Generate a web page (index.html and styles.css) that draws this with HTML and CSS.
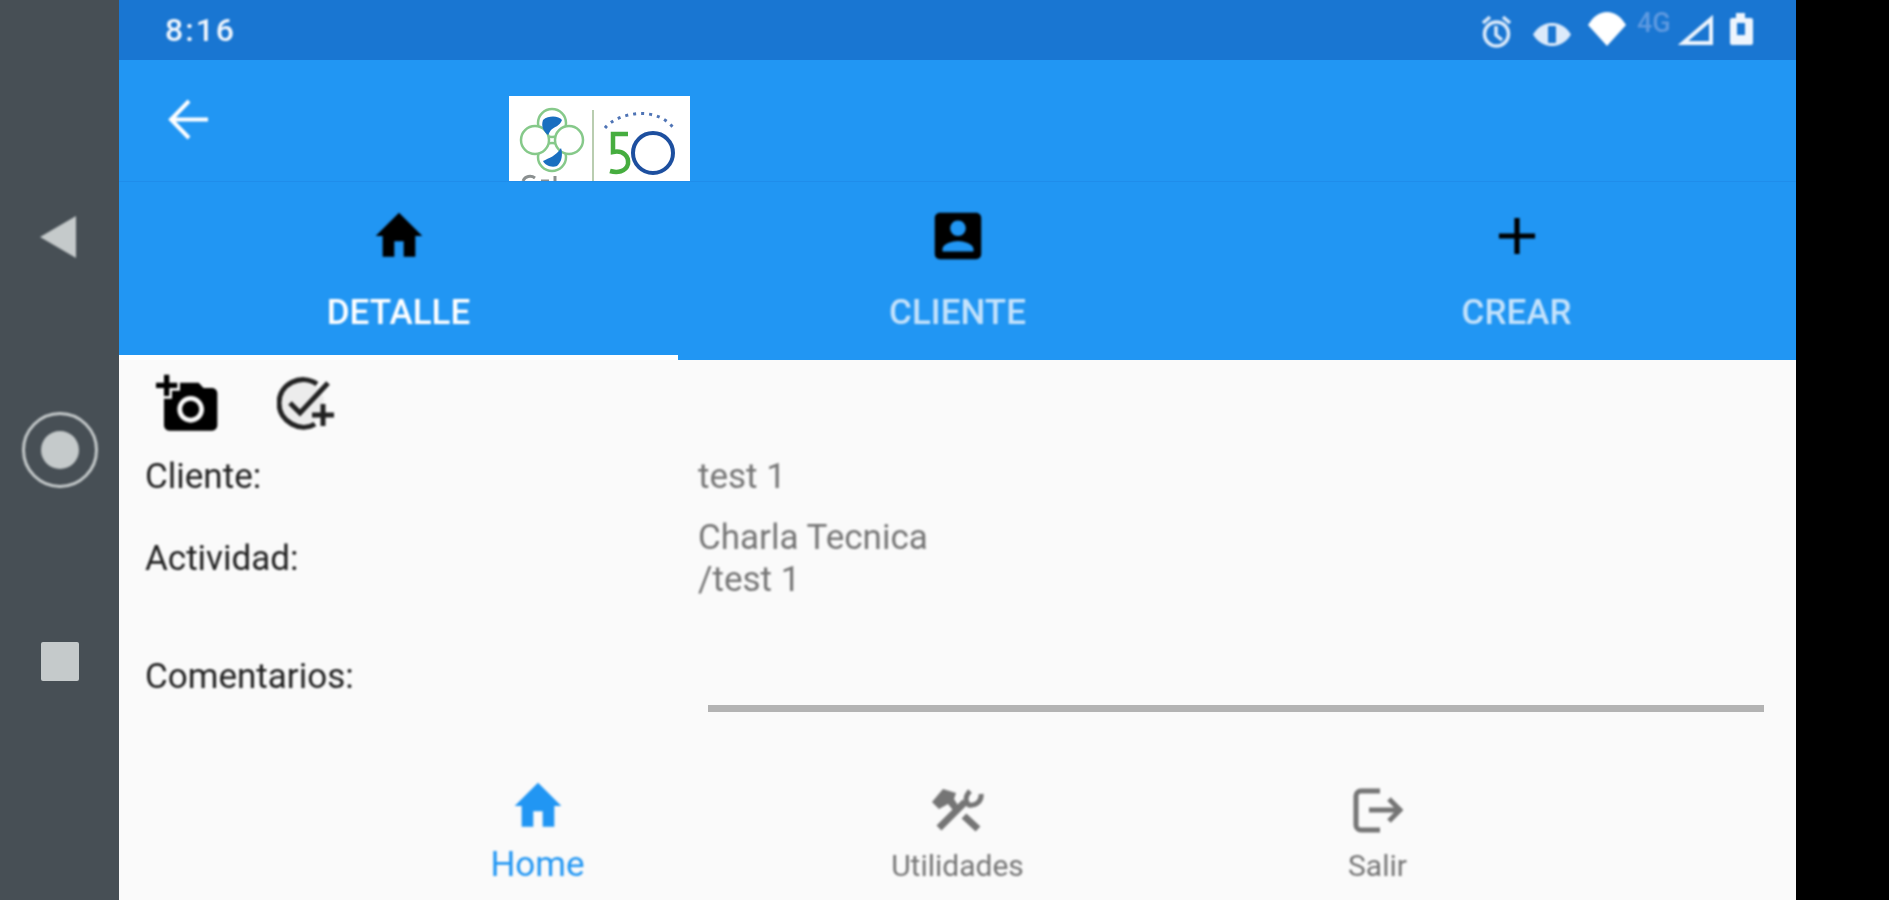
FILE: index.html
```html
<!DOCTYPE html>
<html>
<head>
    <title>Detalle</title>
    <link rel="stylesheet" href="styles.css">
</head>
<body>
    <div class="device">
        <div class="nav-keys">
            <svg class="key-back" viewBox="0 0 38 42"><path d="M37 0V42L1 21z"/></svg>
            <svg class="key-home" viewBox="0 0 76 76"><circle class="ring" cx="38" cy="38" r="36.5"/><circle cx="38" cy="38" r="19"/></svg>
            <div class="key-recent"></div>
        </div>

        <div class="screen">
            <div class="status-bar">
                <span class="clock">8:16</span>
                <div class="status-icons">
                    <svg class="status-left" viewBox="0 0 145 37">
                        <g fill="none" stroke="#dceafa" stroke-width="3.5">
                            <circle cx="15.5" cy="22" r="12"/>
                            <path d="M15 14v9l6 5M2 11l7-6M29 11l-7-6"/>
                        </g>
                        <path fill="#dceafa" d="M52 22.500C58 12 68 11 71 11S84 12 90 22.500C84 33 74 34 71 34S58 33 52 22.500z"/>
                        <rect x="67" y="14" width="8" height="17" rx="1" fill="#1976d2"/>
                        <path fill="#fff" d="M107 13C112 5 118 0 126 0 134 0 140 5 145 13L126 34z"/>
                    </svg>
                    <span class="net-type">4G</span>
                    <svg class="status-right" viewBox="0 0 75 34">
                        <path fill="none" stroke="#eef5fd" stroke-width="4" d="M5 30H33V6z"/>
                        <path fill="#eef5fd" d="M52 7a2 2 0 0 1 2-2h4V0h9v5h6a2 2 0 0 1 2 2v23a2 2 0 0 1-2 2H54a2 2 0 0 1-2-2z"/>
                        <rect x="59" y="10" width="8" height="12" fill="#1976d2"/>
                    </svg>
                </div>
            </div>

            <div class="app-bar">
                <svg class="back-arrow" viewBox="0 0 41 41"><path d="M40 20.500H3M21 2 3 20.500 21 39"/></svg>
                <div class="logo">
                    <svg viewBox="0 0 181 85">
                        <g fill="#fff" stroke="#86c98a" stroke-width="2.500">
                            <circle cx="43" cy="27" r="14"/>
                            <circle cx="43" cy="61" r="14"/>
                            <circle cx="26" cy="44" r="14"/>
                            <circle cx="60" cy="44" r="14"/>
                        </g>
                        <path fill="#1a6fc0" d="M34 24C40 19 50 20 53 24 51 30 45 31 42 34 40 37 39 39 39 39 34 35 32 30 34 24z"/>
                        <path fill="#1a6fc0" d="M52 52C54 58 53 66 48 70 42 72 36 69 34 65 40 62 47 60 52 52z"/>
                        <rect x="83" y="14" width="2" height="71" fill="#b9cdb0"/>
                        <path fill="none" stroke="#46ad3f" stroke-width="4.500" d="M119 38H104V56C114 54 120 60 119 68 117 76 108 77 101 75"/>
                        <circle cx="144" cy="57" r="20" fill="none" stroke="#1d4f9f" stroke-width="4"/>
                        <path fill="none" stroke="#4f74b5" stroke-width="3" stroke-dasharray="3 5" d="M96 32C108 17 148 8 166 34"/>
                        <path fill="none" stroke="#8a8f8f" stroke-width="3" d="M14 85c2-5 8-6 12-3M32 85h8M46 85v-5"/>
                    </svg>
                </div>
            </div>

            <div class="tabs">
                <div class="tab active">
                    <svg class="tab-icon" viewBox="0 0 24 24" preserveAspectRatio="none"><path d="M10 20v-6h4v6h5v-8h3L12 3 2 12h3v8z"/></svg>
                    <span>DETALLE</span>
                </div>
                <div class="tab">
                    <svg class="tab-icon" viewBox="0 0 24 24" preserveAspectRatio="none"><path d="M3 5v14c0 1.100.89 2 2 2h14c1.100 0 2-.9 2-2V5c0-1.100-.9-2-2-2H5c-1.110 0-2 .9-2 2zm12 4c0 1.660-1.340 3-3 3s-3-1.340-3-3 1.340-3 3-3 3 1.340 3 3zm-9 8c0-2 4-3.100 6-3.100s6 1.100 6 3.100v1H6v-1z"/></svg>
                    <span>CLIENTE</span>
                </div>
                <div class="tab">
                    <svg class="tab-icon" viewBox="0 0 24 24" preserveAspectRatio="none"><path d="M19 13h-6v6h-2v-6H5v-2h6V5h2v6h6v2z"/></svg>
                    <span>CREAR</span>
                </div>
            </div>

            <div class="content">
                <div class="actions">
                    <svg class="add-photo" viewBox="0 0 24 24"><path d="M3 4V1h2v3h3v2H5v3H3V6H0V4h3zm3 6V7h3V4h7l1.830 2H21c1.100 0 2 .9 2 2v12c0 1.100-.9 2-2 2H5c-1.100 0-2-.9-2-2V10h3zm7 9c2.760 0 5-2.240 5-5s-2.240-5-5-5-5 2.240-5 5 2.240 5 5 5zm-3.200-5c0 1.770 1.430 3.200 3.200 3.200s3.200-1.430 3.200-3.200-1.430-3.200-3.200-3.200-3.200 1.430-3.200 3.200z"/></svg>
                    <svg class="add-check" viewBox="0 0 60 56">
                        <circle cx="25" cy="27" r="22" fill="#ececec" stroke="none"/>
                        <path d="M40 8C24-3 2 8 2 27 2 46 24 57 38 48M13 27 23 37 51 7M46 28V50M35 39H57"/>
                    </svg>
                </div>
                <div class="row row-client">
                    <span class="label">Cliente:</span>
                    <span class="value">test 1</span>
                </div>
                <div class="row row-activity">
                    <span class="label">Actividad:</span>
                    <span class="value">Charla Tecnica<br>/test 1</span>
                </div>
                <div class="row row-comment">
                    <span class="label">Comentarios:</span>
                    <div class="comment-line"></div>
                </div>
            </div>

            <div class="bottom-nav">
                <div class="nav-item selected">
                    <div class="nav-icon">
                        <svg class="nav-home" viewBox="0 0 24 24" preserveAspectRatio="none"><path d="M10 20v-6h4v6h5v-8h3L12 3 2 12h3v8z"/></svg>
                    </div>
                    <span>Home</span>
                </div>
                <div class="nav-item">
                    <div class="nav-icon">
                        <svg class="nav-tools" viewBox="-3 0 53 46">
                            <path d="M5 41 31 15M30 29 44 42" stroke-width="7"/>
                            <path fill="#757575" stroke="none" d="M-2 15 9 2 22 6 20 12 27 23 22 27 14 17 5 22z"/>
                            <path stroke-width="5" d="M47 7C48 14 42 19 35 18 31 15 31 9 36 4"/>
                        </svg>
                    </div>
                    <span>Utilidades</span>
                </div>
                <div class="nav-item">
                    <div class="nav-icon">
                        <svg class="nav-exit" viewBox="0 0 50 45"><path d="M27 3H8A5 5 0 0 0 3 8V37A5 5 0 0 0 8 42H27M16 22H46M36 11 47 22 36 33"/></svg>
                    </div>
                    <span>Salir</span>
                </div>
            </div>
        </div>
    </div>
</body>
</html>
```

FILE: styles.css
```css
html, body {
    margin: 0;
    height: 100%;
    background-color: #000;
    overflow: hidden;
}

.device {
    display: flex;
    width: 1889px;
    height: 900px;
    font-family: Roboto, "Liberation Sans", sans-serif;
}

/* the capture is soft, so text and icons get a slight blur */
.device svg,
.device span {
    filter: blur(0.8px);
}

/* android keys on the left */
.nav-keys {
    width: 119px;
    flex: none;
    display: flex;
    flex-direction: column;
    align-items: center;
    gap: 154px;
    padding-top: 216px;
    box-sizing: border-box;
    background-color: #474f55;
}

.nav-keys svg {
    display: block;
    fill: #c5cacb;
}

.key-back {
    width: 38px;
    height: 42px;
    margin-right: 4px;
}

.key-home {
    width: 76px;
    height: 76px;
}

.key-home .ring {
    fill: none;
    stroke: #c5cacb;
    stroke-width: 3;
}

.key-recent {
    width: 38px;
    height: 39px;
    border-radius: 2px;
    background-color: #c5cacb;
}

.screen {
    width: 1677px;
    flex: none;
    display: flex;
    flex-direction: column;
    background-color: #fafafa;
}

/* status bar */
.status-bar {
    height: 60px;
    flex: none;
    display: flex;
    align-items: center;
    justify-content: space-between;
    padding: 0 43px 0 46px;
    background-color: #1976d2;
}

.clock {
    color: #f2f7fd;
    font-size: 32px;
    font-weight: 500;
    letter-spacing: 2px;
}

.status-icons {
    display: flex;
    align-items: center;
    gap: 8px;
}

.status-left {
    width: 145px;
    height: 37px;
    margin-right: 3px;
}

.status-right {
    width: 75px;
    height: 34px;
}

.net-type {
    width: 36px;
    margin-top: -14px;
    margin-right: -3px;
    color: #5f9ae0;
    font-size: 27px;
    font-weight: 500;
}

/* app bar */
.app-bar {
    height: 122px;
    flex: none;
    display: flex;
    box-sizing: border-box;
    padding: 36px 0 0 49px;
    border-bottom: 1px solid #1f8deb;
    background-color: #2196f3;
}

.back-arrow {
    width: 41px;
    height: 41px;
    margin-top: 3px;
    fill: none;
    stroke: #fff;
    stroke-width: 4;
}

.logo {
    width: 181px;
    height: 85px;
    margin-left: 300px;
    background-color: #fff;
}

.logo svg {
    display: block;
    width: 181px;
    height: 85px;
    filter: blur(0.6px);
}

/* tabs */
.tabs {
    height: 178px;
    flex: none;
    display: grid;
    grid-template-columns: repeat(3, 1fr);
    background-color: #2196f3;
}

.tab {
    display: flex;
    flex-direction: column;
    align-items: center;
    box-sizing: border-box;
    padding-top: 23px;
    color: #c4e2fb;
    font-size: 35px;
    font-weight: 500;
}

.tab.active {
    color: #fff;
    border-bottom: 5px solid #fff;
}

.tab span {
    margin-top: 26px;
    line-height: 40px;
}

.tab-icon {
    width: 62px;
    height: 62px;
    fill: #000;
}

.tab.active .tab-icon {
    width: 56px;
}

/* detail rows */
.content {
    flex: 1;
    padding-top: 12px;
    color: #212121;
    font-size: 35px;
}

.actions {
    display: flex;
    align-items: center;
    gap: 57px;
    padding-left: 37px;
}

.add-photo {
    width: 64px;
    height: 64px;
    fill: #000;
}

.add-check {
    width: 60px;
    height: 56px;
    fill: none;
    stroke: #222;
    stroke-width: 5;
}

.row {
    display: grid;
    grid-template-columns: 553px 1fr;
    align-items: center;
    padding-left: 26px;
}

.row-client {
    margin-top: 21px;
    line-height: 40px;
}

.row-activity {
    margin-top: 20px;
    line-height: 42px;
}

.row-comment {
    height: 80px;
    margin-top: 35px;
}

.value {
    color: #757575;
}

.comment-line {
    align-self: end;
    height: 7px;
    margin: 0 32px 4px 10px;
    background-color: #b3b3b3;
}

/* bottom navigation */
.bottom-nav {
    height: 130px;
    flex: none;
    display: flex;
    justify-content: center;
}

.nav-item {
    width: 420px;
    display: flex;
    flex-direction: column;
    align-items: center;
    padding-top: 5px;
    color: #757575;
    font-size: 30px;
}

.nav-item span {
    margin-top: 8px;
    line-height: 42px;
}

.nav-item.selected {
    color: #2196f3;
    font-size: 35px;
}

.nav-item.selected span {
    margin-top: 7px;
}

.nav-icon {
    height: 62px;
    display: flex;
    align-items: flex-end;
}

.nav-home {
    width: 56px;
    height: 62px;
    fill: #2196f3;
}

.nav-tools {
    width: 53px;
    height: 46px;
    margin-bottom: 4px;
    fill: none;
    stroke: #757575;
}

.nav-exit {
    width: 50px;
    height: 45px;
    margin-bottom: 4px;
    fill: none;
    stroke: #757575;
    stroke-width: 5;
}
```
